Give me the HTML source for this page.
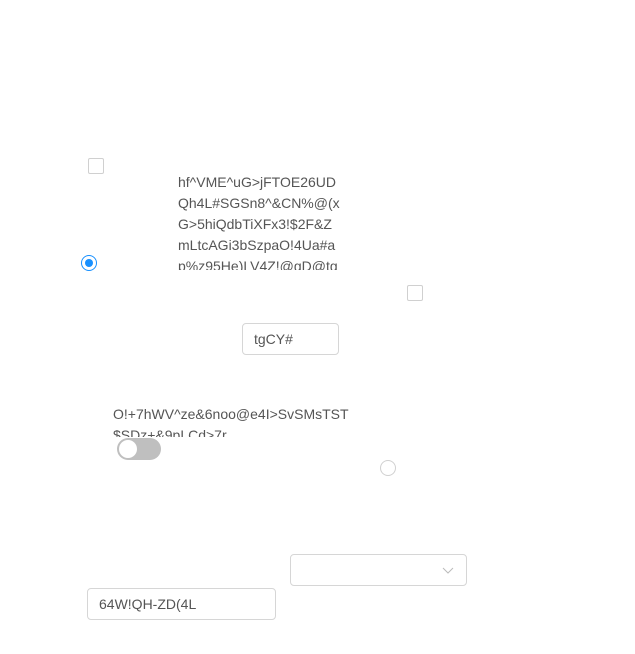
<!DOCTYPE html>
<html><head><style>
body{margin:0;width:635px;height:654px;background:#fff;position:relative;font-family:"Liberation Sans",sans-serif;color:#555;font-size:14px;overflow:hidden}
.a{position:absolute}
.cb{width:14px;height:14px;border:1px solid #d0d0d0;border-radius:2px;background:#fff}
.txt{line-height:21px;overflow:hidden}
.inp{border:1px solid #d6d6d6;border-radius:4px;box-sizing:border-box;padding-left:11px;line-height:30px}
</style></head><body>
<div class="a cb" style="left:88px;top:158px"></div>
<div class="a txt" style="left:178px;top:172px;width:170px;height:98px">hf^VME^uG&gt;jFTOE26UD<br>Qh4L#SGSn8^&amp;CN%@(x<br>G&gt;5hiQdbTiXFx3!$2F&amp;Z<br>mLtcAGi3bSzpaO!4Ua#a<br>p%z95He)LV4Z!@gD@tg</div>
<div class="a" style="left:81px;top:255px;width:14px;height:14px;border:1px solid #1890ff;border-radius:50%;box-sizing:border-box;width:16px;height:16px"><div style="position:absolute;left:3px;top:3px;width:8px;height:8px;border-radius:50%;background:#1890ff"></div></div>
<div class="a cb" style="left:407px;top:285px"></div>
<div class="a inp" style="left:242px;top:323px;width:97px;height:32px">tgCY#</div>
<div class="a txt" style="left:113px;top:404px;width:260px;height:33px">O!+7hWV^ze&amp;6noo@e4I&gt;SvSMsTST<br>$SDz+&amp;9pLCd&gt;7r</div>
<div class="a" style="left:117px;top:438px;width:44px;height:22px;border-radius:11px;background:#bfbfbf"><div style="position:absolute;left:2px;top:2px;width:18px;height:18px;border-radius:50%;background:#fff"></div></div>
<div class="a" style="left:380px;top:460px;width:16px;height:16px;border:1px solid #d0d0d0;border-radius:50%;box-sizing:border-box"></div>
<div class="a inp" style="left:290px;top:554px;width:177px;height:32px"><svg style="position:absolute;right:12px;top:10px" width="12" height="10" viewBox="0 0 12 10"><path d="M1 3 L6 8 L11 3" fill="none" stroke="#bbb" stroke-width="1"/></svg></div>
<div class="a inp" style="left:87px;top:588px;width:189px;height:32px">64W!QH-ZD(4L</div>
</body></html>
